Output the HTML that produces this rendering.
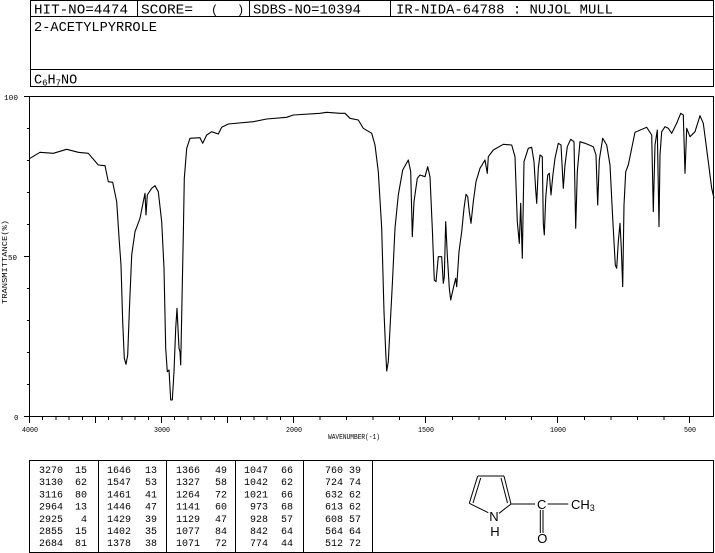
<!DOCTYPE html>
<html><head><meta charset="utf-8"><style>
html,body{margin:0;padding:0;background:#fff;}
svg{display:block;}
.m{font-family:"Liberation Mono",monospace;fill:#000;}
.s{font-family:"Liberation Sans",sans-serif;fill:#000;}
</style></head><body>
<svg width="715" height="553" viewBox="0 0 715 553" xmlns="http://www.w3.org/2000/svg">
<g stroke="#000" stroke-width="1" fill="none" shape-rendering="crispEdges">
<!-- header box -->
<rect x="30.5" y="0.5" width="683" height="86"/>
<line x1="30" y1="16.5" x2="714" y2="16.5"/>
<line x1="30" y1="69.5" x2="714" y2="69.5"/>
<line x1="137.5" y1="0" x2="137.5" y2="16"/>
<line x1="249.5" y1="0" x2="249.5" y2="16"/>
<line x1="390.5" y1="0" x2="390.5" y2="16"/>
<!-- plot frame -->
<rect x="29.5" y="96.5" width="684" height="320"/>
<!-- table -->
<rect x="29.5" y="460.5" width="684" height="92"/>
<line x1="98.5" y1="460" x2="98.5" y2="553"/>
<line x1="166.5" y1="460" x2="166.5" y2="553"/>
<line x1="235.5" y1="460" x2="235.5" y2="553"/>
<line x1="303.5" y1="460" x2="303.5" y2="553"/>
<line x1="372.5" y1="460" x2="372.5" y2="553"/>
</g>
<!-- y ticks -->
<g stroke="#000" stroke-width="1" shape-rendering="crispEdges">
<line x1="24" y1="96.5" x2="30" y2="96.5"/>
<line x1="24" y1="256.5" x2="30" y2="256.5"/>
<line x1="24" y1="416.5" x2="30" y2="416.5"/>
<line x1="27" y1="128.5" x2="30" y2="128.5"/>
<line x1="27" y1="160.5" x2="30" y2="160.5"/>
<line x1="27" y1="192.5" x2="30" y2="192.5"/>
<line x1="27" y1="224.5" x2="30" y2="224.5"/>
<line x1="27" y1="288.5" x2="30" y2="288.5"/>
<line x1="27" y1="320.5" x2="30" y2="320.5"/>
<line x1="27" y1="352.5" x2="30" y2="352.5"/>
<line x1="27" y1="384.5" x2="30" y2="384.5"/>
<!-- x ticks: 4000-2000, 100 step 13.2 -->
<line x1="29.5" y1="417" x2="29.5" y2="423"/>
<line x1="42.7" y1="417" x2="42.7" y2="420"/>
<line x1="55.9" y1="417" x2="55.9" y2="420"/>
<line x1="69.1" y1="417" x2="69.1" y2="420"/>
<line x1="82.3" y1="417" x2="82.3" y2="420"/>
<line x1="95.5" y1="417" x2="95.5" y2="423"/>
<line x1="108.7" y1="417" x2="108.7" y2="420"/>
<line x1="121.9" y1="417" x2="121.9" y2="420"/>
<line x1="135.1" y1="417" x2="135.1" y2="420"/>
<line x1="148.3" y1="417" x2="148.3" y2="420"/>
<line x1="161.5" y1="417" x2="161.5" y2="423"/>
<line x1="174.7" y1="417" x2="174.7" y2="420"/>
<line x1="187.9" y1="417" x2="187.9" y2="420"/>
<line x1="201.1" y1="417" x2="201.1" y2="420"/>
<line x1="214.3" y1="417" x2="214.3" y2="420"/>
<line x1="227.5" y1="417" x2="227.5" y2="423"/>
<line x1="240.7" y1="417" x2="240.7" y2="420"/>
<line x1="253.9" y1="417" x2="253.9" y2="420"/>
<line x1="267.1" y1="417" x2="267.1" y2="420"/>
<line x1="280.3" y1="417" x2="280.3" y2="420"/>
<line x1="293.5" y1="417" x2="293.5" y2="423"/>
<line x1="320" y1="417" x2="320" y2="420"/>
<line x1="346.5" y1="417" x2="346.5" y2="420"/>
<line x1="372.9" y1="417" x2="372.9" y2="420"/>
<line x1="399.4" y1="417" x2="399.4" y2="420"/>
<line x1="425.5" y1="417" x2="425.5" y2="423"/>
<line x1="452.3" y1="417" x2="452.3" y2="420"/>
<line x1="478.8" y1="417" x2="478.8" y2="420"/>
<line x1="505.3" y1="417" x2="505.3" y2="420"/>
<line x1="531.7" y1="417" x2="531.7" y2="420"/>
<line x1="557.5" y1="417" x2="557.5" y2="423"/>
<line x1="584.7" y1="417" x2="584.7" y2="420"/>
<line x1="611.1" y1="417" x2="611.1" y2="420"/>
<line x1="637.6" y1="417" x2="637.6" y2="420"/>
<line x1="664" y1="417" x2="664" y2="420"/>
<line x1="689.5" y1="417" x2="689.5" y2="423"/>
</g>
<!-- spectrum -->
<polyline fill="none" stroke="#000" stroke-width="1.1" stroke-linejoin="round" points="
30,158.3 40,152.3 53.3,153.3 66.7,149.3 78.3,152.3 88.3,153.3 98.3,165 105,165.7 108.3,181.7 112.7,182.3 116.7,201.7 119.3,241.7 121,265 122.7,321.7 124.3,358.3 126,364.3 127.7,355 129.3,311.7 131.7,255 135,231.7 140,218.3 143.3,201.7 145,193.3 146,215 147.3,195 151.7,188.3 155,185.7 158.3,191.7 161.7,221.7 164,268.3 165.7,348.3 167.3,371.7 169,370 170.7,400 172.3,400 174,371.7 175.7,328.3 177,308.3 178,328.3 179,348.3 180,351.7 180.7,365 181.7,315 183.3,235 184.3,178.3 186.7,148.3 190,138.3 200,137.7 202.7,143.3 206.7,135 211.7,131.7 218.3,134 221.7,127.3 228.3,124 253.3,121.7 266.7,119 286.7,117.3 293.3,115 320,113.3 326.7,112.3 340,113.3 345,113.3 350,118.3 358.3,120 363.3,128.3 371.7,133.3 375,145 378.3,171.7 381.7,228.3 384,311.7 385.7,351.7 386.7,371 388.3,361.7 390,328.3 392.3,285 395,228.3 398.3,195 402.7,170 408.3,160 410.7,171.7 412.3,236.7 414,201.7 417.3,178.3 420,175 425,176.7 427.7,166.7 430,176.7 432.3,228.3 434.3,280 436,281.7 438.3,256.7 441.7,256.7 443.3,283.3 444.3,276.7 445.7,221.7 447.3,255 449.3,288.3 450.7,300 453.3,288.3 455.7,278.3 456.7,286.7 459,251.7 461.7,231.7 464,208.3 466,194.3 467.7,196.7 469.3,211.7 471,223.3 473.3,201.7 476,181.7 480,168.3 485,160 487.3,173.3 488.3,156.7 493.3,150 503.3,144.3 511.7,145 515,156.7 517.3,221.7 519.3,243.3 520.7,203.3 522.3,258.3 524,161.7 528.3,148.3 531.7,147.3 534,161.7 535.7,190 536.7,203.3 538.3,168.3 540,155 542.3,156.7 543.3,223.3 544.3,235 545.7,198.3 547.7,175 549.3,173.3 551,195 552.7,176.7 555,158.3 558.3,143.3 561,145 563.3,188.3 565,165 567.3,146.7 570.7,139.3 574,141.7 575.7,228.3 577.3,171.7 580,141.7 585,143.3 593.3,146.7 596,155 597.7,205 599.3,160 602.7,138.3 606.7,145 610,165 612.7,218.3 615.3,265 616.7,268.3 618.3,241.7 620,223.3 621.3,248.3 622.7,286.7 624,205 625.7,171.7 628.3,165 631.7,148.3 635,132.3 646.7,127.3 651.7,135 653.3,211.7 655,145 657.3,130 659,226.7 660,155 661.7,131.7 665,126.7 668.3,128.3 671.7,133.3 676.7,123.3 680.7,113.3 683.3,115 685,173.3 686.7,128.3 690,136.7 695,131.7 700,115.7 703.3,123.3 708.3,161.7 711.7,188.3 714,198.3"/>
<!-- header texts -->
<text class="m" x="34" y="13.5" font-size="13.5" textLength="94" lengthAdjust="spacingAndGlyphs">HIT-NO=4474</text>
<text class="m" x="141" y="13.5" font-size="13.5" textLength="52" lengthAdjust="spacingAndGlyphs">SCORE=</text>
<text class="m" x="211" y="13.5" font-size="12">(</text>
<text class="m" x="237" y="13.5" font-size="12">)</text>
<text class="m" x="253" y="13.5" font-size="13.5" textLength="108" lengthAdjust="spacingAndGlyphs">SDBS-NO=10394</text>
<text class="m" x="396" y="13.5" font-size="13.5" textLength="217" lengthAdjust="spacingAndGlyphs">IR-NIDA-64788 : NUJOL MULL</text>
<text class="m" x="34" y="31" font-size="13.5" textLength="123" lengthAdjust="spacingAndGlyphs">2-ACETYLPYRROLE</text>
<text class="m" x="34" y="83.5" font-size="13.5">C<tspan font-size="9" dy="2">6</tspan><tspan dy="-2">H</tspan><tspan font-size="9" dy="2">7</tspan><tspan dy="-2">NO</tspan></text>
<!-- axis labels -->
<g class="m" font-size="7.5">
<text x="4" y="100" textLength="14" lengthAdjust="spacingAndGlyphs">100</text>
<text x="8" y="260">50</text>
<text x="14" y="420">0</text>
<text x="22" y="432" textLength="16" lengthAdjust="spacingAndGlyphs">4000</text>
<text x="154" y="432" textLength="16" lengthAdjust="spacingAndGlyphs">3000</text>
<text x="286" y="432" textLength="16" lengthAdjust="spacingAndGlyphs">2000</text>
<text x="418" y="432" textLength="16" lengthAdjust="spacingAndGlyphs">1500</text>
<text x="550" y="432" textLength="16" lengthAdjust="spacingAndGlyphs">1000</text>
<text x="684" y="432" textLength="12" lengthAdjust="spacingAndGlyphs">500</text>
<text x="328" y="439" textLength="52" lengthAdjust="spacingAndGlyphs">WAVENUMBER(-1)</text>
<text transform="translate(7,304) rotate(-90)" textLength="84" lengthAdjust="spacingAndGlyphs">TRANSMITTANCE(%)</text>
</g>
<!-- table -->
<g class="m" font-size="10" text-anchor="end">
<text x="63" y="473">3270</text><text x="63" y="485">3130</text><text x="63" y="497.5">3116</text><text x="63" y="509.5">2964</text><text x="63" y="522">2925</text><text x="63" y="534">2855</text><text x="63" y="546">2684</text>
<text x="87" y="473">15</text><text x="87" y="485">62</text><text x="87" y="497.5">80</text><text x="87" y="509.5">13</text><text x="87" y="522">4</text><text x="87" y="534">15</text><text x="87" y="546">81</text>
<text x="131" y="473">1646</text><text x="131" y="485">1547</text><text x="131" y="497.5">1461</text><text x="131" y="509.5">1446</text><text x="131" y="522">1429</text><text x="131" y="534">1402</text><text x="131" y="546">1378</text>
<text x="157" y="473">13</text><text x="157" y="485">53</text><text x="157" y="497.5">41</text><text x="157" y="509.5">47</text><text x="157" y="522">39</text><text x="157" y="534">35</text><text x="157" y="546">38</text>
<text x="200" y="473">1366</text><text x="200" y="485">1327</text><text x="200" y="497.5">1264</text><text x="200" y="509.5">1141</text><text x="200" y="522">1129</text><text x="200" y="534">1077</text><text x="200" y="546">1071</text>
<text x="227" y="473">49</text><text x="227" y="485">58</text><text x="227" y="497.5">72</text><text x="227" y="509.5">60</text><text x="227" y="522">47</text><text x="227" y="534">84</text><text x="227" y="546">72</text>
<text x="268" y="473">1047</text><text x="268" y="485">1042</text><text x="268" y="497.5">1021</text><text x="268" y="509.5">973</text><text x="268" y="522">928</text><text x="268" y="534">842</text><text x="268" y="546">774</text>
<text x="293" y="473">66</text><text x="293" y="485">62</text><text x="293" y="497.5">66</text><text x="293" y="509.5">68</text><text x="293" y="522">57</text><text x="293" y="534">64</text><text x="293" y="546">44</text>
<text x="343" y="473">760</text><text x="343" y="485">724</text><text x="343" y="497.5">632</text><text x="343" y="509.5">613</text><text x="343" y="522">608</text><text x="343" y="534">564</text><text x="343" y="546">512</text>
<text x="361" y="473">39</text><text x="361" y="485">74</text><text x="361" y="497.5">62</text><text x="361" y="509.5">62</text><text x="361" y="522">57</text><text x="361" y="534">64</text><text x="361" y="546">72</text>
</g>
<!-- molecule -->
<g stroke="#000" stroke-width="1" fill="none">
<line x1="477.7" y1="476" x2="504" y2="476"/>
<line x1="477.7" y1="476" x2="469.3" y2="503.3"/>
<line x1="480.7" y1="478" x2="473" y2="503"/>
<line x1="504" y1="476" x2="511" y2="504"/>
<line x1="501" y1="478" x2="507.5" y2="503"/>
<line x1="469.3" y1="503.3" x2="488.3" y2="512.7"/>
<line x1="511" y1="504" x2="499" y2="513.3"/>
<line x1="511" y1="504" x2="535" y2="504"/>
<line x1="547.7" y1="504" x2="568.3" y2="504"/>
<line x1="540.3" y1="510" x2="540.3" y2="533"/>
<line x1="543" y1="510" x2="543" y2="533"/>
</g>
<g class="s" font-size="13" text-anchor="middle">
<text x="494" y="521">N</text>
<text x="495" y="536">H</text>
<text x="541.7" y="509">C</text>
<text x="542.3" y="543">O</text>
</g>
<text class="s" x="571" y="509" font-size="13">CH<tspan font-size="9" dy="2">3</tspan></text>
</svg>
</body></html>
